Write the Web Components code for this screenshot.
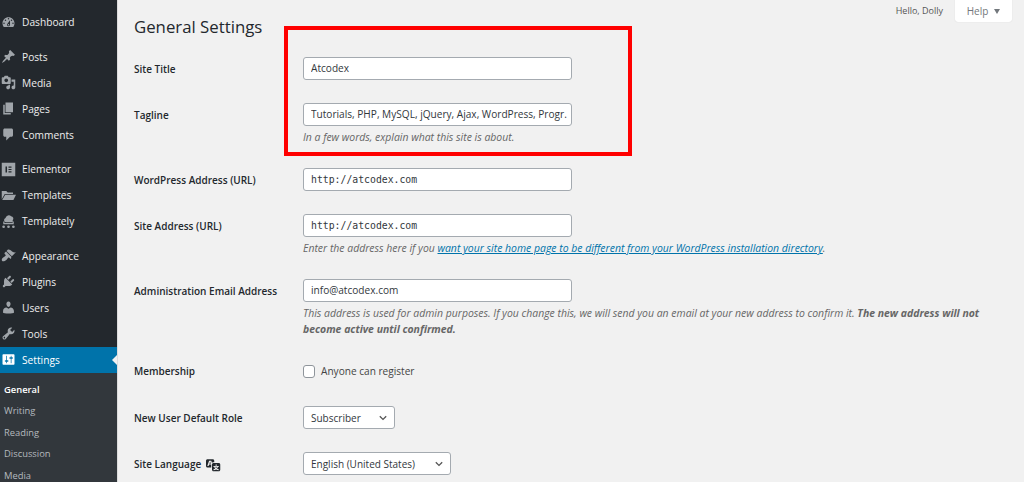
<!DOCTYPE html>
<html lang="en">
<head>
<meta charset="utf-8">
<title>General Settings</title>
<style>
  html, body { margin: 0; height: 482px; overflow: hidden; background: #f1f1f1; }
  body { font-family: "Open Sans", "Noto Sans", sans-serif; font-size: 10.5px; }
</style>
</head>
<body>
<wp-admin-page>
  <wp-sidebar slot="sidebar">
    <wp-menu-item icon="dashboard" spaced>Dashboard</wp-menu-item>
    <wp-menu-item icon="post">Posts</wp-menu-item>
    <wp-menu-item icon="media">Media</wp-menu-item>
    <wp-menu-item icon="page">Pages</wp-menu-item>
    <wp-menu-item icon="comments" spaced>Comments</wp-menu-item>
    <wp-menu-item icon="elementor">Elementor</wp-menu-item>
    <wp-menu-item icon="folder">Templates</wp-menu-item>
    <wp-menu-item icon="cloud" spaced>Templately</wp-menu-item>
    <wp-menu-item icon="appearance">Appearance</wp-menu-item>
    <wp-menu-item icon="plugins">Plugins</wp-menu-item>
    <wp-menu-item icon="users">Users</wp-menu-item>
    <wp-menu-item icon="tools">Tools</wp-menu-item>
    <wp-menu-item icon="settings" current>Settings</wp-menu-item>
    <wp-submenu>
      <wp-submenu-item current>General</wp-submenu-item>
      <wp-submenu-item>Writing</wp-submenu-item>
      <wp-submenu-item>Reading</wp-submenu-item>
      <wp-submenu-item>Discussion</wp-submenu-item>
      <wp-submenu-item>Media</wp-submenu-item>
    </wp-submenu>
  </wp-sidebar>

  <wp-page-head>General Settings</wp-page-head>

  <wp-field label="Site Title"><wp-text-box>Atcodex</wp-text-box></wp-field>
  <wp-field label="Tagline">
    <wp-text-box>Tutorials, PHP, MySQL, jQuery, Ajax, WordPress, Progr.</wp-text-box>
    <wp-note>In a few words, explain what this site is about.</wp-note>
  </wp-field>
  <wp-field label="WordPress Address (URL)"><wp-text-box mono>http://atcodex.com</wp-text-box></wp-field>
  <wp-field label="Site Address (URL)">
    <wp-text-box mono>http://atcodex.com</wp-text-box>
    <wp-note wide>Enter the address here if you <wp-link>want your site home page to be different from your WordPress installation directory</wp-link>.</wp-note>
  </wp-field>
  <wp-field label="Administration Email Address">
    <wp-text-box>info@atcodex.com</wp-text-box>
    <wp-note wide>This address is used for admin purposes. If you change this, we will send you an email at your new address to confirm it. <b>The new address will not</b><br><b>become active until confirmed.</b></wp-note>
  </wp-field>
  <wp-field label="Membership" compact><wp-check-box>Anyone can register</wp-check-box></wp-field>
  <wp-field label="New User Default Role"><wp-select-box width="92">Subscriber</wp-select-box></wp-field>
  <wp-field label="Site Language" translate-icon><wp-select-box width="148">English (United States)</wp-select-box></wp-field>

  <wp-highlight slot="overlay"></wp-highlight>
</wp-admin-page>

<script>
const ICONS = {
  dashboard: '<path d="M3.76 16h12.48c1.1-1.37 1.76-3.11 1.76-5 0-4.42-3.58-8-8-8s-8 3.58-8 8c0 1.89.66 3.63 1.76 5zM10 4c.55 0 1 .45 1 1s-.45 1-1 1-1-.45-1-1 .45-1 1-1zM6 6c.55 0 1 .45 1 1s-.45 1-1 1-1-.45-1-1 .45-1 1-1zm8 0c.55 0 1 .45 1 1s-.45 1-1 1-1-.45-1-1 .45-1 1-1zm-5.37 5.55L12 7v6c0 1.1-.9 2-2 2s-2-.9-2-2c0-.57.24-1.08.63-1.45zM4 10c.55 0 1 .45 1 1s-.45 1-1 1-1-.45-1-1 .45-1 1-1zm12 0c.55 0 1 .45 1 1s-.45 1-1 1-1-.45-1-1 .45-1 1-1zm-5 3c0-.55-.45-1-1-1s-1 .45-1 1 .45 1 1 1 1-.45 1-1z"/>',
  post: '<path d="M10.44 3.02l1.82-1.82 6.36 6.35-1.83 1.82c-1.05-.68-2.48-.57-3.41.36l-.75.75c-.92.93-1.04 2.35-.35 3.41l-1.83 1.82-2.41-2.41-2.8 2.79c-.42.42-3.38 2.71-3.8 2.29s1.86-3.39 2.28-3.81l2.79-2.79L4.1 9.36l1.83-1.82c1.05.69 2.48.57 3.4-.36l.75-.75c.93-.92 1.05-2.35.36-3.41z"/>',
  media: '<path d="M13 11V4c0-.55-.45-1-1-1h-1.67L9 1H5L3.67 3H2c-.55 0-1 .45-1 1v7c0 .55.45 1 1 1h10c.55 0 1-.45 1-1zM7 4.5c1.38 0 2.5 1.12 2.5 2.5S8.38 9.5 7 9.5 4.5 8.38 4.5 7 5.62 4.5 7 4.5zM14 6h5v10.5c0 1.38-1.12 2.5-2.5 2.5S14 17.88 14 16.5s1.12-2.5 2.5-2.5c.17 0 .34.02.5.05V9h-3V6zm-4 8.05V13h2v3.5c0 1.38-1.12 2.5-2.5 2.5S7 17.88 7 16.5 8.12 14 9.5 14c.17 0 .34.02.5.05z"/>',
  page: '<path d="M6 15V2h10v13H6zm-1 1h8v2H3V5h2v11z"/>',
  comments: '<path d="M5 2h9c1.1 0 2 .9 2 2v7c0 1.1-.9 2-2 2h-2l-5 5v-5H5c-1.1 0-2-.9-2-2V4c0-1.1.9-2 2-2z"/>',
  elementor: '<path fill-rule="evenodd" d="M1 1h18v18H1zM6 6v8h2V6zm4 0v1.6h4V6zm0 3.2v1.6h4V9.2zm0 3.2V14h4v-1.6z"/>',
  folder: '<path d="M1 4h6l2 2h7v2H5L1 15zM5.6 9H20l-3.4 7H1.6z"/>',
  cloud: '<path d="M7 11a3 3 0 0 1-1-5.800A4.500 4.500 0 0 1 13.500 3a3.200 3.200 0 0 1 2 5.500A1.800 1.800 0 0 1 15 11z"/><path d="M3 10h1.600v2H15.400v-2H17v3.600H3z"/><circle cx="3.500" cy="17" r="1.800"/><circle cx="10" cy="17" r="1.800"/><circle cx="16.500" cy="17" r="1.800"/>',
  appearance: '<path d="M14.48 11.06L7.41 3.99l1.5-1.5c.5-.56 2.3-.47 3.51.32 1.21.8 1.43 1.28 2.91 2.1 1.18.64 2.45 1.26 4.45.85zm-.71.71L6.7 4.7 4.93 6.47c-.39.39-.39 1.02 0 1.41l1.06 1.06c.39.39.39 1.03 0 1.42-.6.6-1.43 1.11-2.21 1.69-.35.26-.7.53-1.01.84C1.43 13.23.91 15.1 1.06 16.3c.1.6.87 1.4 1.58 1.5 1.19.15 3.07-.37 4.4-1.71.31-.31.58-.66.85-1.02.57-.78 1.08-1.61 1.69-2.21.39-.39 1.02-.39 1.41 0l1.06 1.06c.39.39 1.03.39 1.42 0z"/>',
  plugins: '<path d="M13.11 4.36L9.87 7.6 8 5.73l3.24-3.24c.35-.34 1.05-.2 1.56.32.52.51.66 1.21.31 1.55zm-8 1.77l.91-1.12 9.01 9.01-1.19.84c-.71.71-2.63 1.16-3.82 1.16H6.14L4.9 17.26c-.59.59-1.54.59-2.12 0-.59-.58-.59-1.53 0-2.12l1.24-1.24v-3.88c0-1.13.4-3.19 1.09-3.89zm7.26 3.97l3.24-3.24c.34-.35 1.04-.21 1.55.31.52.51.66 1.21.31 1.55l-3.24 3.25z"/>',
  users: '<path d="M10 9.25c-2.27 0-2.73-3.44-2.73-3.44C7 4.02 7.82 2 9.97 2c2.16 0 2.98 2.02 2.71 3.81 0 0-.41 3.44-2.68 3.44zm0 2.57L12.72 10c2.39 0 4.52 2.33 4.52 4.53v2.49s-3.65 1.13-7.24 1.13c-3.65 0-7.24-1.13-7.24-1.13v-2.49c0-2.25 1.94-4.48 4.47-4.48z"/>',
  tools: '<path d="M16.68 9.77c-1.34 1.34-3.3 1.67-4.95.99l-5.41 6.52c-.99.99-2.59.99-3.58 0s-.99-2.59 0-3.57l6.52-5.42c-.68-1.65-.35-3.61.99-4.95 1.28-1.28 3.12-1.62 4.72-1.06l-2.89 2.89 2.82 2.82 2.86-2.87c.53 1.58.18 3.39-1.08 4.67zM3.81 16.21c.4.39 1.04.39 1.43 0 .4-.4.4-1.04 0-1.43-.39-.4-1.03-.4-1.43 0-.39.39-.39 1.03 0 1.43z"/>',
  settings: '<path d="M18 16V4c0-.55-.45-1-1-1H3c-.55 0-1 .45-1 1v12c0 .55.45 1 1 1h14c.55 0 1-.45 1-1zM8 11h1c.55 0 1 .45 1 1s-.45 1-1 1H8v1.5c0 .28-.22.5-.5.5s-.5-.22-.5-.5V13H6c-.55 0-1-.45-1-1s.45-1 1-1h1V5.5c0-.28.22-.5.5-.5s.5.22.5.5V11zm5-2h-1c-.55 0-1-.45-1-1s.45-1 1-1h1V5.5c0-.28.22-.5.5-.5s.5.22.5.5V7h1c.55 0 1 .45 1 1s-.45 1-1 1h-1v5.5c0 .28-.22.5-.5.5s-.5-.22-.5-.5V9z"/>',
  translation: '<path d="M11 7H9.49c-.63 0-1.25.3-1.59.7L7 5H4.13l-2.39 7h1.69l.74-2H7v4H2c-1.1 0-2-.9-2-2V5c0-1.1.9-2 2-2h7c1.1 0 2 .9 2 2v2zM6.51 9H4.49l1-2.93zM10 8h7c1.1 0 2 .9 2 2v7c0 1.1-.9 2-2 2h-7c-1.1 0-2-.9-2-2v-7c0-1.1.9-2 2-2zm7.25 5v-1.08h-3.17V9.75h-1.16v2.17H9.75V13h1.28c.11.85.56 1.85 1.28 2.62-.87.36-1.89.62-2.31.62-.01.02.22.97.2 1.46.84 0 2.21-.5 3.28-1.15 1.09.65 2.48 1.15 3.34 1.15-.02-.49.2-1.44.2-1.46-.43 0-1.49-.27-2.38-.63.7-.77 1.14-1.77 1.25-2.61h1.36zm-3.81 1.93c-.5-.46-.85-1.13-1.01-1.93h2.09c-.17.8-.51 1.47-1 1.93l-.04.03s-.03-.02-.04-.03z"/>'
};

// small helper so each class is only its markup
function shadow(el, html) {
  el.attachShadow({ mode: 'open' });
  el.shadowRoot.innerHTML = html;
}

class WpAdminPage extends HTMLElement {
  constructor() {
    super();
    shadow(this, `
      <style>
        :host { display: flex; height: 482px; overflow: hidden; position: relative; }
        main { flex: 1; padding-left: 17px; padding-right: 12px; min-width: 0; }
      </style>
      <slot name="sidebar"></slot>
      <main><slot></slot></main>
      <slot name="overlay"></slot>`);
  }
}

class WpSidebar extends HTMLElement {
  constructor() {
    super();
    shadow(this, `
      <style>
        :host { display: block; flex: none; width: 117px; height: 482px; padding-top: 9px; box-sizing: border-box;
                background: #23282d; box-shadow: 1px 0 0 #dcdcdc; }
      </style>
      <slot></slot>`);
  }
}

class WpMenuItem extends HTMLElement {
  constructor() {
    super();
    const path = ICONS[this.getAttribute('icon')];
    shadow(this, `
      <style>
        :host { display: flex; align-items: center; gap: 6px; height: 26px; padding-left: 1px; position: relative;
                color: #eeeeee; font-size: 10.2px; }
        :host([spaced]) { margin-bottom: 8.5px; }
        :host([current]) { background: #0073aa; color: #fff; }
        svg { width: 15px; height: 15px; fill: #a0a5aa; flex: none; }
        :host([current]) svg { fill: #fff; }
        i { display: none; position: absolute; right: 0; top: 8px; border: 5px solid transparent; border-right-color: #f1f1f1; border-left: 0; }
        :host([current]) i { display: block; }
      </style>
      <svg viewBox="0 0 20 20">${path}</svg><span><slot></slot></span><i></i>`);
  }
}

class WpSubmenu extends HTMLElement {
  constructor() {
    super();
    shadow(this, `
      <style>:host { display: block; background: #32373c; padding: 6.5px 0 20px; }</style>
      <slot></slot>`);
  }
}

class WpSubmenuItem extends HTMLElement {
  constructor() {
    super();
    shadow(this, `
      <style>
        :host { display: block; height: 21.4px; line-height: 21.4px; padding-left: 4px; font-size: 9.4px; color: #b4b9be; }
        :host([current]) { color: #fff; font-weight: 600; }
      </style>
      <slot></slot>`);
  }
}

class WpPageHead extends HTMLElement {
  constructor() {
    super();
    shadow(this, `
      <style>
        :host { display: flex; justify-content: space-between; align-items: flex-start; height: 57px; }
        h1 { margin: 14px 0 0; font-size: 16.8px; line-height: 26px; font-weight: 400; color: #23282d; }
        .meta { display: flex; align-items: flex-start; gap: 12px; }
        .hello { font-size: 9px; line-height: 22px; color: #555; }
        .help { width: 57px; height: 22px; box-sizing: border-box; background: #fff; border-radius: 0 0 3px 3px;
                box-shadow: 0 0 1px 0 #c9c9c9; display: flex; align-items: center; justify-content: center; gap: 6px;
                font-size: 10px; color: #72777c; }
        .help i { border: 3.5px solid transparent; border-top: 5px solid #72777c; border-bottom: 0; }
      </style>
      <h1><slot></slot></h1>
      <div class="meta"><span class="hello">Hello, Dolly</span><div class="help">Help<i></i></div></div>`);
  }
}

class WpField extends HTMLElement {
  constructor() {
    super();
    const icon = this.hasAttribute('translate-icon')
      ? `<svg viewBox="0 0 20 20">${ICONS.translation}</svg>` : '';
    shadow(this, `
      <style>
        :host { display: grid; grid-template-columns: 169px 1fr; padding-bottom: 23px; }
        :host([compact]) { margin-top: 1px; padding-bottom: 25px; }
        .label { font-size: 10px; font-weight: 600; height: 23px; padding-top: 1px; box-sizing: border-box; color: #23282d; display: flex; align-items: center; gap: 5px; align-self: start; }
        :host([compact]) .label { height: 20px; padding-top: 0; }
        svg { width: 15px; height: 15px; fill: #23282d; flex: none; }
      </style>
      <div class="label">${this.getAttribute('label')}${icon}</div>
      <div><slot></slot></div>`);
  }
}

class WpTextBox extends HTMLElement {
  constructor() {
    super();
    shadow(this, `
      <style>
        :host { display: block; width: 269px; height: 23px; box-sizing: border-box; padding: 0 4px 0 7px; overflow: hidden;
                background: #fff; border: 1px solid #a4aab0; border-radius: 3px;
                font-size: 10.1px; line-height: 21px; color: #32373c; white-space: nowrap; }
        :host([mono]) { font-family: "DejaVu Sans Mono", "Liberation Mono", monospace; font-size: 9.8px; }
        div { overflow: hidden; }
      </style>
      <div><slot></slot></div>`);
  }
}

class WpNote extends HTMLElement {
  constructor() {
    super();
    shadow(this, `
      <style>
        :host { display: block; margin-top: 3px; width: 269px; font-size: 10.45px; line-height: 16px; font-style: italic; color: #666; }
        :host([wide]) { width: 690px; }
      </style>
      <slot></slot>`);
  }
}

class WpLink extends HTMLElement {
  constructor() {
    super();
    shadow(this, `
      <style>:host { color: #0073aa; text-decoration: underline; }</style>
      <slot></slot>`);
  }
}

class WpCheckBox extends HTMLElement {
  constructor() {
    super();
    shadow(this, `
      <style>
        :host { display: flex; align-items: center; gap: 6px; height: 20px; font-size: 10.1px; color: #444; }
        i { width: 12px; height: 13px; box-sizing: border-box; background: #fff; border: 1px solid #8f959b; border-radius: 3px; }
      </style>
      <i></i><span><slot></slot></span>`);
  }
}

class WpSelectBox extends HTMLElement {
  constructor() {
    super();
    shadow(this, `
      <style>
        :host { display: flex; align-items: center; justify-content: space-between; height: 23px; box-sizing: border-box;
                width: ${this.getAttribute('width')}px; padding: 0 7px; background: #fff; border: 1px solid #a4aab0; border-radius: 3px;
                font-size: 10px; color: #32373c; }
        svg { width: 8px; height: 6px; fill: none; stroke: #555; stroke-width: 1.3; }
      </style>
      <span><slot></slot></span>
      <svg viewBox="0 0 8 6"><path d="M.8 1.2 4 4.4l3.2-3.2"/></svg>`);
  }
}

class WpHighlight extends HTMLElement {
  constructor() {
    super();
    shadow(this, `
      <style>
        :host { position: absolute; left: 284px; top: 26px; width: 348px; height: 130px; box-sizing: border-box; border: 4px solid #f00; }
      </style>`);
  }
}

customElements.define('wp-admin-page', WpAdminPage);
customElements.define('wp-sidebar', WpSidebar);
customElements.define('wp-menu-item', WpMenuItem);
customElements.define('wp-submenu', WpSubmenu);
customElements.define('wp-submenu-item', WpSubmenuItem);
customElements.define('wp-page-head', WpPageHead);
customElements.define('wp-field', WpField);
customElements.define('wp-text-box', WpTextBox);
customElements.define('wp-note', WpNote);
customElements.define('wp-link', WpLink);
customElements.define('wp-check-box', WpCheckBox);
customElements.define('wp-select-box', WpSelectBox);
customElements.define('wp-highlight', WpHighlight);
</script>
</body>
</html>
